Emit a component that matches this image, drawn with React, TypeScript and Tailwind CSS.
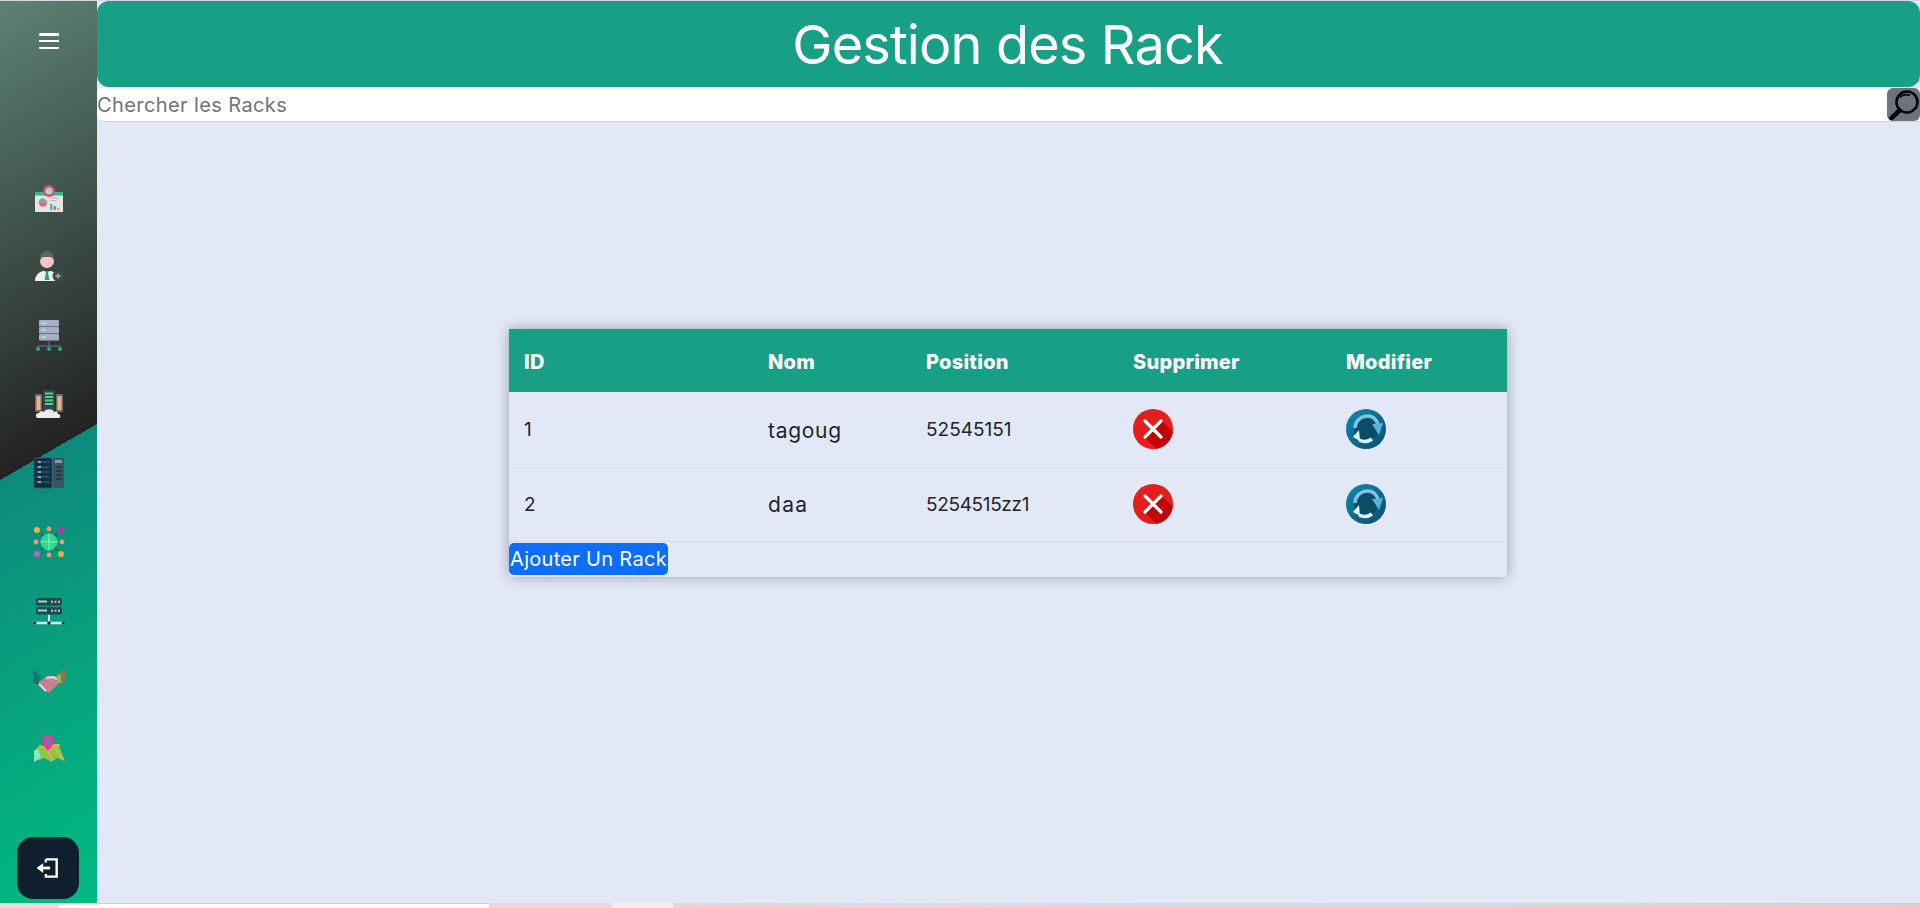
import { useId } from "react";

function Dashboard() {
  return (
    <svg width="32" height="32" viewBox="0 0 32 32" className="translate-y-[2px]">
      <rect x="2" y="7" width="28" height="20" fill="#e4e6e6" />
      <rect x="2" y="7" width="28" height="3.5" fill="#35b58a" />
      <circle cx="16" cy="6" r="6" fill="#e5408f" />
      <circle cx="16" cy="6" r="3.6" fill="#9fd9c2" />
      <circle cx="10" cy="17.5" r="4.2" fill="#ef5a8f" />
      <path d="M10 17.5V13.3A4.2 4.2 0 0 1 14.2 17.5Z" fill="#f2b04a" />
      <path d="M6 17.5A4.2 4.2 0 0 1 14 17.5Z" fill="#4dc59b" />
      <rect x="17" y="19" width="2.5" height="6" fill="#39c6b0" />
      <rect x="20.5" y="21" width="2.5" height="4" fill="#ef5a8f" />
      <rect x="24" y="23" width="2.5" height="2" fill="#f2a04a" />
      <path d="M17 13h9M17 15.5h7" stroke="#b5b9b9" strokeWidth="1" />
    </svg>
  );
}

function Person() {
  return (
    <svg width="32" height="32" viewBox="0 0 32 32" className="-translate-y-[1px]">
      <path d="M2 30c0-6 4-9 8-10h8c4 1 8 4 8 10Z" fill="#eef0f0" />
      <path d="M12 20h4l-1 2 1.500 7h-5l1.500-7Z" fill="#2a9d8f" />
      <circle cx="14" cy="10" r="7" fill="#f6c6c6" />
      <path d="M7 10c-1-7 3-10 7-10s8 3 7 10c-1-3-2-4-4-4h-6c-2 0-3 1-4 4Z" fill="#5c6563" />
      <circle cx="25" cy="25" r="5.500" fill="#444a49" />
      <path d="M25 22.500v5M22.500 25h5" stroke="#aab0af" strokeWidth="1.500" />
    </svg>
  );
}

function ServerNetwork() {
  return (
    <svg width="32" height="32" viewBox="0 0 32 32">
      {[0, 7, 14].map((y) => (
        <g key={y}>
          <rect x="6" y={y} width="20" height="6.500" fill="#a8aec8" rx="1" />
          <rect x="8" y={y + 2} width="5" height="2" fill="#9fe0c4" />
        </g>
      ))}
      <path d="M16 21v5M5 29v-3h22v3" stroke="#6f7d7b" strokeWidth="1" fill="none" />
      <circle cx="5" cy="29" r="2" fill="#28a79a" />
      <circle cx="16" cy="29" r="2" fill="#28a79a" />
      <circle cx="27" cy="29" r="2" fill="#28a79a" />
    </svg>
  );
}

function ServerCloud() {
  return (
    <svg width="32" height="32" viewBox="0 0 32 32">
      <rect x="2" y="5" width="7" height="18" fill="#6b6b68" rx="1" />
      <rect x="23" y="5" width="7" height="18" fill="#6b6b68" rx="1" />
      <rect x="3.500" y="7" width="4" height="14" fill="#f0ad92" />
      <rect x="24.500" y="7" width="4" height="14" fill="#f0ad92" />
      <rect x="10" y="1" width="12" height="21" fill="#2f4a48" rx="1" />
      <path d="M12 4.500h8M12 8h8M12 11.500h8M12 15h8" stroke="#4fd08f" strokeWidth="2" />
      <path d="M5 29c-3 0-3-5 1-5 1-2 4-2 5-1 1-3 8-4 10 0 2-1 4 0 4 2 3 0 3 4 1 4Z" fill="#ececea" />
    </svg>
  );
}

function Rack() {
  return (
    <svg width="32" height="32" viewBox="0 0 32 32">
      <rect x="1" y="1" width="18" height="30" fill="#0e2c40" stroke="#3b5263" strokeWidth="1" rx="1" />
      <rect x="20" y="1" width="11" height="30" fill="#3d5262" rx="1" />
      {[5, 10, 15, 20, 25].map((y) => (
        <g key={y}>
          <path d={`M3 ${y}h14`} stroke="#234a60" strokeWidth="2.500" />
          <path d={`M5 ${y}h3`} stroke="#a6c0c8" strokeWidth="1.500" />
        </g>
      ))}
      <rect x="22" y="3" width="7" height="3" fill="#8a98a2" />
      {[10, 14, 18, 22].map((y) => (
        <path key={y} d={`M23 ${y}h6`} stroke="#1b3040" strokeWidth="1.500" />
      ))}
    </svg>
  );
}

function Globe() {
  return (
    <svg width="32" height="32" viewBox="0 0 32 32">
      <path d="M8 8l4 4M24 24l-4-4M24 8l-4 4M8 24l4-4" stroke="#0c5048" strokeWidth="1.500" />
      <circle cx="16" cy="16" r="8.500" fill="#33d68f" />
      <path d="M16 7.500v17M7.500 16h17" stroke="#8ceebf" strokeWidth="1" />
      <circle cx="4" cy="4" r="3" fill="#f6b13f" />
      <circle cx="28" cy="4" r="3" fill="#c732a5" />
      <circle cx="4" cy="28" r="3" fill="#d957c5" />
      <circle cx="28" cy="28" r="3" fill="#f0a83a" />
      <circle cx="16" cy="3" r="2.400" fill="#f09a72" />
      <circle cx="16" cy="29" r="2.400" fill="#f09a72" />
      <circle cx="3" cy="16" r="2.400" fill="#f09a72" />
      <circle cx="29" cy="16" r="2.400" fill="#f09a72" />
    </svg>
  );
}

function ServerLan() {
  return (
    <svg width="32" height="30" viewBox="0 0 32 30" className="translate-y-[2px]">
      {[1, 10].map((y) => (
        <g key={y}>
          <rect x="3" y={y} width="26" height="7.500" rx="2" fill="#154f52" />
          <path d={`M5 ${y + 3.500}h9`} stroke="#a3dcae" strokeWidth="2" />
          <path d={`M18 ${y + 3.700}h2M21.500 ${y + 3.700}h2M25 ${y + 3.700}h2`} stroke="#f3b592" strokeWidth="2" />
        </g>
      ))}
      <path d="M16 18v7" stroke="#d8f2ea" strokeWidth="2" />
      <path d="M1 26h30" stroke="#d0efe6" strokeWidth="2.500" />
      <circle cx="16" cy="26" r="1.800" fill="#103f44" />
      <circle cx="2" cy="26" r="1.500" fill="#103f44" />
      <circle cx="30" cy="26" r="1.500" fill="#103f44" />
    </svg>
  );
}

function Shake() {
  return (
    <svg width="32" height="26" viewBox="0 0 32 26" className="translate-y-[3px]">
      <path d="M0 1l8 6-3 9-5-3Z" fill="#17766e" />
      <path d="M32 0l-8 5 1 11 7-3Z" fill="#8a7a4a" />
      <path d="M6 13l9-6h7l3 8-9 9-4-2-6-6Z" fill="#c97f90" />
      <path d="M6 15l7 7M13 9l7-1 4 2" stroke="#f8d4d4" strokeWidth="2" fill="none" />
      <rect x="24" y="6" width="4" height="8" fill="#a6b062" />
    </svg>
  );
}

function MapPin() {
  return (
    <svg width="32" height="30" viewBox="0 0 32 30" className="translate-y-[2px]">
      <path d="M1 17l6-6 7 3 5-3 7 1 6 15-8-3-6 4-6-4-11 3Z" fill="#88cb3e" />
      <path d="M1 17l4-3 3 10-7 4Z" fill="#8fe4b8" />
      <path d="M6 12l8 2 8-3 5 0M14 14l5 12M22 14l8 12" stroke="#f2a36a" strokeWidth="2.200" fill="none" />
      <path d="M15 17c-3-4-6-7-6-10a6 6 0 0 1 12 0c0 3-3 6-6 10Z" fill="#ec34a8" />
      <circle cx="15" cy="7" r="2.400" fill="#21a98a" />
    </svg>
  );
}

function DeleteIcon() {
  const id = useId();
  return (
    <svg width="40" height="40" viewBox="0 0 40 40">
      <defs>
        <clipPath id={id}>
          <circle cx="20" cy="20" r="20" />
        </clipPath>
      </defs>
      <circle cx="20" cy="20" r="20" fill="#e41d1d" />
      <path d="M28 11l14 14v17H26L11 28Z" fill="#c00505" clipPath={`url(#${id})`} />
      <path d="M12 12l16 16M28 12L12 28" stroke="#fff" strokeWidth="3.200" strokeLinecap="round" />
    </svg>
  );
}

function RefreshIcon() {
  const id = useId();
  return (
    <svg width="40" height="40" viewBox="0 0 40 40">
      <defs>
        <linearGradient id={id} x1="0" y1="0" x2="1" y2="1">
          <stop offset="0" stopColor="#0f8aab" />
          <stop offset="1" stopColor="#0d4c6c" />
        </linearGradient>
      </defs>
      <circle cx="20" cy="20" r="20" fill={`url(#${id})`} />
      <circle cx="20" cy="20" r="12" fill="#0b4c68" />
      <path d="M9 19c0-6 5-12 13-12 5 0 8 3 10 8" stroke="#7cc4ea" strokeWidth="3.500" fill="none" />
      <path d="M26 15l11-1-4 12Z" fill="#55b3dc" />
      <path d="M26 30c-4 3-9 3-13 1" stroke="#dceff8" strokeWidth="3.500" fill="none" />
      <path d="M7 28l6-7 1 11Z" fill="#e8f5fb" />
    </svg>
  );
}

function SearchIcon() {
  return (
    <svg width="33" height="33" viewBox="0 0 33 33" fill="none">
      <circle cx="20" cy="14" r="10.500" stroke="#000" strokeWidth="2.600" />
      <path d="M13 9.500C15 7 19 6 23 7.500" stroke="#000" strokeWidth="1.600" />
      <path d="M12.500 22.500L4.500 30" stroke="#000" strokeWidth="4.500" strokeLinecap="round" />
    </svg>
  );
}

const navIcons = [Dashboard, Person, ServerNetwork, ServerCloud, Rack, Globe, ServerLan, Shake, MapPin];

const rows = [
  { id: "1", nom: "tagoug", position: "52545151", nomClass: "tracking-[0.700px]", posClass: "tracking-normal", rowClass: "h-[75px]" },
  { id: "2", nom: "daa", position: "5254515zz1", nomClass: "tracking-[1.300px]", posClass: "tracking-[-0.350px]", rowClass: "h-[74px]" },
];

const strip = [
  "w-[59px] bg-[#e6dcdf]",
  "w-[430px] bg-white border-t border-[#cfcfcf]",
  "w-[123px] bg-[#ead8dd]",
  "w-[61px] bg-[#f4ecef]",
];

export default function App() {
  return (
    <div className="flex h-[908px] w-full flex-col overflow-hidden bg-[#e2e8f6] font-['Inter','Liberation_Sans',sans-serif] text-[#212529]">
      <div className="flex min-h-0 flex-1 border-t border-[#d4d8e2]">
        <aside className="flex w-[97px] shrink-0 flex-col items-center bg-[linear-gradient(150deg,#5c8373_0%,#222222_50%,#0e8a7c_50%,#00bb80_100%)]">
          <button className="mt-[32px] flex h-[16px] w-[20px] flex-col justify-between">
            <span className="h-[2.500px] w-full bg-white" />
            <span className="h-[2.500px] w-full bg-white" />
            <span className="h-[2.500px] w-full bg-white" />
          </button>
          <nav className="mt-[116px] flex flex-col items-center">
            {navIcons.map((Icon, i) => (
              <a key={i} className="flex h-[68.500px] w-[32px] items-center justify-center">
                <Icon />
              </a>
            ))}
          </nav>
          <button className="mt-auto mr-[1px] mb-[4px] flex h-[62px] w-[62px] items-center justify-center rounded-2xl bg-[#0f1f2e]">
            <svg width="26" height="26" viewBox="0 0 24 24" fill="none">
              <path d="M10 4h10v16H10v-2.500" stroke="#fff" strokeWidth="2.200" />
              <path d="M10 4v3" stroke="#fff" strokeWidth="2.200" />
              <path d="M3 12h11" stroke="#fff" strokeWidth="2.600" />
              <path d="M1.500 12L7.500 7.500v9Z" fill="#fff" />
            </svg>
          </button>
        </aside>
        <main className="flex min-w-0 flex-1 flex-col">
          <header className="flex h-[86px] items-center justify-center rounded-xl bg-[#17a085]">
            <h1 className="pt-[2px] pr-[2px] text-[54px] leading-none font-normal tracking-[-0.850px] text-white">Gestion des Rack</h1>
          </header>
          <div className="mt-px flex h-[34px] items-stretch rounded-l-md border-b border-[#cfd3da] bg-white">
            <span className="flex flex-1 items-center text-[20px] tracking-[0.400px] text-[#6c757d]">Chercher les Racks</span>
            <button className="flex w-[33px] items-center justify-center rounded-md bg-[#6c757d]">
              <SearchIcon />
            </button>
          </div>
          <div className="flex justify-center pt-[207px] pr-[1px]">
            <div className="w-[998px] bg-[#e2e8f6] shadow-[0_0_12px_rgba(0,0,0,0.32)]">
              <table className="w-full table-fixed border-collapse text-left text-[19px]">
                <colgroup>
                  <col className="w-[244px]" />
                  <col className="w-[158px]" />
                  <col className="w-[207px]" />
                  <col className="w-[213px]" />
                  <col />
                </colgroup>
                <thead>
                  <tr className="h-[63px] bg-[#17a085] text-[20px] text-white">
                    {["ID", "Nom", "Position", "Supprimer", "Modifier"].map((h) => (
                      <th key={h} className="px-[15px] pt-[3px] font-extrabold tracking-[0.250px]">{h}</th>
                    ))}
                  </tr>
                </thead>
                <tbody>
                  {rows.map((r) => (
                    <tr key={r.id} className={`border-b border-[#d9dde6] ${r.rowClass}`}>
                      <td className="px-[15px] pt-[2px]">{r.id}</td>
                      <td className={`px-[15px] pt-[2px] text-[21px] ${r.nomClass}`}>{r.nom}</td>
                      <td className={`px-[15px] pt-[2px] ${r.posClass}`}>{r.position}</td>
                      <td className="px-[15px]">
                        <span className="block h-[40px] w-[40px]"><DeleteIcon /></span>
                      </td>
                      <td className="px-[15px]">
                        <span className="block h-[40px] w-[40px]"><RefreshIcon /></span>
                      </td>
                    </tr>
                  ))}
                </tbody>
              </table>
              <div className="pt-[1px] pb-[2px]">
                <button className="block h-[32px] w-[159px] rounded-[5px] bg-[#0d6efd] text-center text-[20px] leading-[32px] tracking-[0.300px] text-white">
                  Ajouter Un Rack
                </button>
              </div>
            </div>
          </div>
        </main>
      </div>
      <div className="flex h-[5px] shrink-0">
        {strip.map((c) => (
          <div key={c} className={c} />
        ))}
        <div className="flex-1 bg-[linear-gradient(90deg,#e3d6dc_0%,#e4d4d4_7%,#d8dbe6_14%,#e0d8e4_22%,#d3dae0_40%,#cfdce4_58%,#d6d8d8_80%,#d3d3d0_100%)]" />
      </div>
    </div>
  );
}
